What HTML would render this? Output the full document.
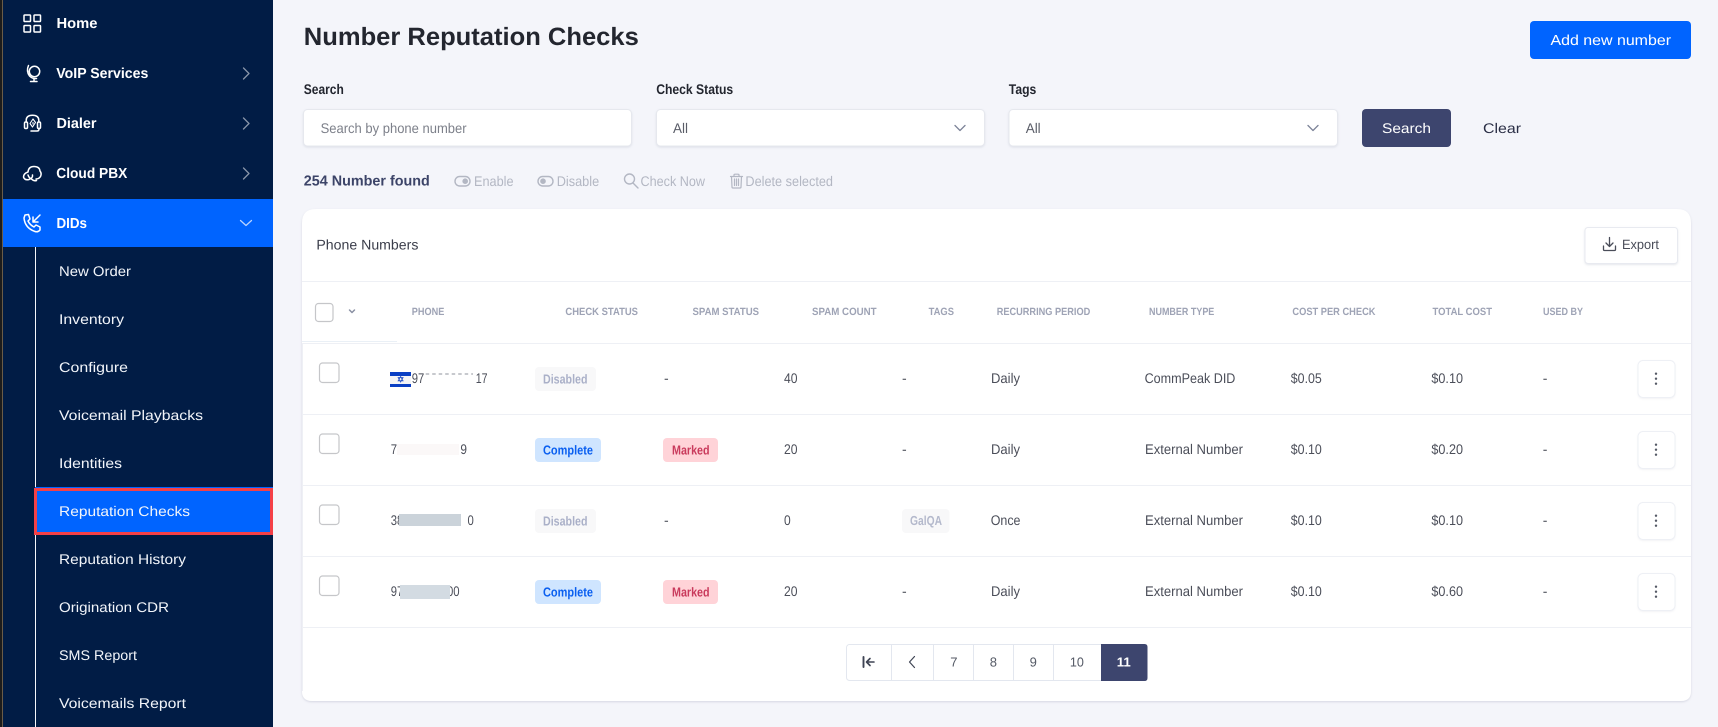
<!DOCTYPE html>
<html><head><meta charset="utf-8"><title>Number Reputation Checks</title>
<style>
html,body{margin:0;padding:0;background:#f4f5fa;width:1718px;height:727px;overflow:hidden}
svg{display:block}
text{font-family:"Liberation Sans",sans-serif;white-space:pre}
.nav{font-size:14.5px;font-weight:700;fill:#fff}
.sub{font-size:14px;fill:#f2f5fa}
.lbl{font-size:14px;font-weight:700;fill:#23262f}
.th{font-size:10.5px;font-weight:700;fill:#9ea3b5}
.td{font-size:14px;fill:#4b4e59}
.act{font-size:14px;fill:#b3b7c3}
.bd{font-size:13px;font-weight:700}
.pg{font-size:13px;fill:#555a66}
.ic{fill:none;stroke:#fff;stroke-width:1.5;stroke-linecap:round;stroke-linejoin:round}
.gr{fill:none;stroke:#b3b7c3;stroke-width:1.4;stroke-linecap:round;stroke-linejoin:round}
</style></head><body>
<svg width="1718" height="727" viewBox="0 0 1718 727" xmlns="http://www.w3.org/2000/svg" text-rendering="geometricPrecision">
<defs>
<filter id="sh" x="-5%" y="-20%" width="110%" height="140%"><feDropShadow dx="0" dy="1" stdDeviation="1" flood-color="#8a90a8" flood-opacity=".22"/></filter>
<filter id="sl" x="-10%" y="-10%" width="120%" height="120%"><feDropShadow dx="0" dy="1" stdDeviation=".7" flood-color="#8a90a8" flood-opacity=".1"/></filter>
<filter id="cs" x="-2%" y="-2%" width="104%" height="104%"><feDropShadow dx="0" dy="1" stdDeviation="1" flood-color="#8a90a8" flood-opacity=".3"/></filter>
</defs>
<rect width="1718" height="727" fill="#f4f5fa"/>
<!-- sidebar -->
<rect x="0" y="0" width="273" height="727" fill="#011c45"/>
<rect x="0" y="0" width="2" height="727" fill="#1c1c1c"/>
<rect x="2" y="0" width="1" height="727" fill="#6a5c48"/>
<rect x="3" y="199" width="270" height="48" fill="#0064ff"/>
<rect x="35" y="247" width="1" height="480" fill="#f4f6fa"/>
<rect x="35" y="487" width="238" height="48" fill="#0064ff"/>
<rect x="35.5" y="489.5" width="236" height="44" fill="none" stroke="#f44047" stroke-width="3"/>

<!-- sidebar icons -->
<g class="ic">
<rect x="24" y="15" width="6.5" height="6.5" rx=".8"/><rect x="34" y="15" width="6.5" height="6.5" rx=".8"/>
<rect x="24" y="25.5" width="6.5" height="6.5" rx=".8"/><rect x="34" y="25.5" width="6.5" height="6.5" rx=".8"/>
</g>
<g class="ic" stroke-width="1.2">
<circle cx="34.5" cy="71.5" r="5.2"/><path d="M28.5 65.5 Q26 71 29.5 76 Q32.5 79 36.5 78.5"/><path d="M34 79V81M30.5 81.5H37"/>
<path d="M26.2 122V120.500Q26.200 115.300 32.500 115.300Q38.800 115.300 38.800 120.500V122"/>
<rect x="24.500" y="122" width="3" height="6.500" rx="1.200"/><rect x="37.500" y="122" width="3" height="6.500" rx="1.200"/>
<path d="M39 128.500V129Q39 131 37 131H31"/>
<path d="M33 119L35.500 122.500L32.500 127L30 123.500ZM33 122.500V124" stroke-width="1.100"/>
<path d="M28 172Q28.500 166.500 34 166.500Q39.500 166.500 40 171Q42 173.500 40.500 176.500Q39 179 36 179M28 172Q23.500 173.500 23.500 177Q24.500 180.500 29 179.500Q33 178 32.500 175M28 175Q29 178 31.500 179Q34 181.500 36.500 180.500"/>
<path d="M25 215L28.5 214.5L30 219L28 221Q30 225 34 227L36 225L40 227V230Q38 232.500 35 231.500Q25 228 24 218Z" stroke-width="1.500"/>
<path d="M40 215L33 222M33 217V222H38" stroke-width="1.500"/>
</g>
<g fill="none" stroke="#8a96aa" stroke-width="1.3" stroke-linecap="round" stroke-linejoin="round">
<path d="M243.500 68L249 73.500L243.500 79"/><path d="M243.500 118L249 123.500L243.500 129"/><path d="M243.500 168L249 173.500L243.500 179"/>
<path d="M240.500 220.500L246 225.500L251.500 220.500" stroke="#b9d3ff"/>
</g>

<!-- sidebar text -->
<text class="nav" x="56.500" y="28" textLength="41" lengthAdjust="spacingAndGlyphs">Home</text>
<text class="nav" x="56.300" y="78" textLength="92" lengthAdjust="spacingAndGlyphs">VoIP Services</text>
<text class="nav" x="56.500" y="128" textLength="40" lengthAdjust="spacingAndGlyphs">Dialer</text>
<text class="nav" x="56.300" y="178" textLength="71" lengthAdjust="spacingAndGlyphs">Cloud PBX</text>
<text class="nav" x="56.500" y="228" textLength="30.500" lengthAdjust="spacingAndGlyphs">DIDs</text>
<text class="sub" x="59" y="276" textLength="72" lengthAdjust="spacingAndGlyphs">New Order</text>
<text class="sub" x="59" y="324" textLength="65" lengthAdjust="spacingAndGlyphs">Inventory</text>
<text class="sub" x="59" y="372" textLength="69" lengthAdjust="spacingAndGlyphs">Configure</text>
<text class="sub" x="59" y="420" textLength="144" lengthAdjust="spacingAndGlyphs">Voicemail Playbacks</text>
<text class="sub" x="59" y="468" textLength="63" lengthAdjust="spacingAndGlyphs">Identities</text>
<text class="sub" x="59" y="516" textLength="131" lengthAdjust="spacingAndGlyphs">Reputation Checks</text>
<text class="sub" x="59" y="564" textLength="127" lengthAdjust="spacingAndGlyphs">Reputation History</text>
<text class="sub" x="59" y="612" textLength="110" lengthAdjust="spacingAndGlyphs">Origination CDR</text>
<text class="sub" x="59" y="660" textLength="78" lengthAdjust="spacingAndGlyphs">SMS Report</text>
<text class="sub" x="59" y="708" textLength="127" lengthAdjust="spacingAndGlyphs">Voicemails Report</text>

<!-- header -->
<text x="303.800" y="45" font-size="25" font-weight="700" fill="#23262f" textLength="335" lengthAdjust="spacingAndGlyphs">Number Reputation Checks</text>
<rect x="1530" y="21" width="161" height="38" rx="4" fill="#0064ff"/>
<text x="1550.500" y="45" font-size="14.500" fill="#fff" textLength="120.500" lengthAdjust="spacingAndGlyphs">Add new number</text>

<!-- filters -->
<text class="lbl" x="303.800" y="94" textLength="40" lengthAdjust="spacingAndGlyphs">Search</text>
<text class="lbl" x="656.200" y="94" textLength="77" lengthAdjust="spacingAndGlyphs">Check Status</text>
<text class="lbl" x="1008.800" y="94" textLength="27.500" lengthAdjust="spacingAndGlyphs">Tags</text>
<g fill="#fff" stroke="#e6e8ee" filter="url(#sh)">
<rect x="303.500" y="109.500" width="328" height="36.500" rx="4"/>
<rect x="656.500" y="109.500" width="328" height="36.500" rx="4"/>
<rect x="1009" y="109.500" width="328.500" height="36.500" rx="4"/>
</g>
<text x="320.600" y="133" font-size="14" fill="#7d808a" textLength="146" lengthAdjust="spacingAndGlyphs">Search by phone number</text>
<text x="673" y="133" font-size="14" fill="#5a5d68" textLength="15" lengthAdjust="spacingAndGlyphs">All</text>
<text x="1025.700" y="133" font-size="14" fill="#5a5d68" textLength="15" lengthAdjust="spacingAndGlyphs">All</text>
<g fill="none" stroke="#7c8398" stroke-width="1.300" stroke-linecap="round" stroke-linejoin="round">
<path d="M955 125.500L960 130.500L965 125.500"/><path d="M1308 125.500L1313 130.500L1318 125.500"/>
</g>
<rect x="1362" y="109" width="89" height="38" rx="4" fill="#3d456e"/>
<text x="1382" y="133" font-size="14" fill="#fff" textLength="49" lengthAdjust="spacingAndGlyphs">Search</text>
<text x="1483" y="133" font-size="14" fill="#2a2e45" textLength="38" lengthAdjust="spacingAndGlyphs">Clear</text>

<!-- action row -->
<text x="303.800" y="185.700" font-size="14.500" font-weight="700" fill="#3c4468" textLength="126" lengthAdjust="spacingAndGlyphs">254 Number found</text>
<g class="gr">
<rect x="455" y="176.500" width="15" height="9.500" rx="4.700"/><circle cx="465.200" cy="181.200" r="2.800" fill="#b3b7c3" stroke="none"/>
<rect x="538" y="176.500" width="15" height="9.500" rx="4.700"/><circle cx="543" cy="181.200" r="2.800" fill="#b3b7c3" stroke="none"/>
<circle cx="629.500" cy="179" r="5"/><path d="M633 183L638 188"/>
<path d="M730.500 176.500H742.500M734 176.500V175Q734 174.200 735 174.200H738Q739 174.200 739 175V176.500M731.500 176.500L732 187Q732 188 733 188H740Q741 188 741 187L741.500 176.500M734.500 179V185.500M736.500 179V185.500M738.500 179V185.500" stroke-width="1.200"/>
</g>
<text class="act" x="474" y="186" textLength="39.500" lengthAdjust="spacingAndGlyphs">Enable</text>
<text class="act" x="556.700" y="186" textLength="42.500" lengthAdjust="spacingAndGlyphs">Disable</text>
<text class="act" x="640.500" y="186" textLength="64.500" lengthAdjust="spacingAndGlyphs">Check Now</text>
<text class="act" x="745.400" y="186" textLength="87.600" lengthAdjust="spacingAndGlyphs">Delete selected</text>

<!-- card -->
<path d="M302 223Q302 209 316 209H1677Q1691 209 1691 223V691Q1691 701 1681 701H312Q302 701 302 691Z" fill="#fff" filter="url(#cs)"/>
<text x="316.400" y="249.700" font-size="14" fill="#3a3d4a" textLength="102" lengthAdjust="spacingAndGlyphs">Phone Numbers</text>
<rect x="1585" y="227.500" width="92.500" height="36" rx="3" fill="#fff" stroke="#e8eaf0" filter="url(#sh)"/>
<g fill="none" stroke="#4a4d59" stroke-width="1.300" stroke-linecap="round" stroke-linejoin="round">
<path d="M1609.500 237.500V246M1606 243L1609.500 246.500L1613 243M1603.500 246V249.500Q1603.500 250.500 1604.500 250.500H1614.500Q1615.500 250.500 1615.500 249.500V246"/>
</g>
<text x="1622" y="249" font-size="13.500" fill="#4a4d59" textLength="37" lengthAdjust="spacingAndGlyphs">Export</text>

<!-- dividers -->
<g fill="#eef0f5">
<rect x="302" y="281" width="1389" height="1"/>
<rect x="302" y="343" width="1389" height="1"/>
<rect x="302" y="414" width="1389" height="1"/>
<rect x="302" y="485" width="1389" height="1"/>
<rect x="302" y="556" width="1389" height="1"/>
<rect x="302" y="627" width="1389" height="1"/>
</g>
<rect x="302" y="341" width="95" height="1" fill="#eaf0f6"/>
<rect x="302" y="344" width="1" height="347" fill="#eef0f5"/>

<!-- table header -->
<rect x="315.500" y="303.500" width="17.500" height="18" rx="3" fill="#fff" stroke="#c5c6c9" stroke-width="1.200"/>
<path d="M349.500 310L352 312.500L354.500 310" fill="none" stroke="#8a90a3" stroke-width="1.500" stroke-linecap="round" stroke-linejoin="round"/>
<text class="th" x="411.800" y="315" textLength="32.500" lengthAdjust="spacingAndGlyphs">PHONE</text>
<text class="th" x="565.400" y="315" textLength="72.600" lengthAdjust="spacingAndGlyphs">CHECK STATUS</text>
<text class="th" x="692.500" y="315" textLength="66.500" lengthAdjust="spacingAndGlyphs">SPAM STATUS</text>
<text class="th" x="812" y="315" textLength="64.600" lengthAdjust="spacingAndGlyphs">SPAM COUNT</text>
<text class="th" x="928.600" y="315" textLength="25.400" lengthAdjust="spacingAndGlyphs">TAGS</text>
<text class="th" x="996.700" y="315" textLength="93.600" lengthAdjust="spacingAndGlyphs">RECURRING PERIOD</text>
<text class="th" x="1149" y="315" textLength="65.300" lengthAdjust="spacingAndGlyphs">NUMBER TYPE</text>
<text class="th" x="1292.400" y="315" textLength="83.100" lengthAdjust="spacingAndGlyphs">COST PER CHECK</text>
<text class="th" x="1432.500" y="315" textLength="59.500" lengthAdjust="spacingAndGlyphs">TOTAL COST</text>
<text class="th" x="1543" y="315" textLength="40" lengthAdjust="spacingAndGlyphs">USED BY</text>

<!-- row checkboxes -->
<g fill="#fff" stroke="#c5c6c9" stroke-width="1.200">
<rect x="319.500" y="363" width="19.500" height="19.500" rx="3"/>
<rect x="319.500" y="434" width="19.500" height="19.500" rx="3"/>
<rect x="319.500" y="505" width="19.500" height="19.500" rx="3"/>
<rect x="319.500" y="576" width="19.500" height="19.500" rx="3"/>
</g>

<!-- phones -->
<rect x="390" y="372" width="21" height="15" fill="#f4f4f6"/>
<rect x="390" y="372" width="21" height="4" fill="#0a3fc4"/>
<rect x="390" y="384" width="21" height="3" fill="#0a3fc4"/>
<path d="M400.600 376.500L403 380.800H398.200ZM400.600 381.900L403 377.600H398.200Z" fill="none" stroke="#2f58c8" stroke-width=".9"/>
<text class="td" x="411.800" y="382.800" textLength="12.500" lengthAdjust="spacingAndGlyphs">97</text>
<path d="M425.700 374H473" stroke="#8f939c" stroke-width="1" stroke-dasharray="3.500 3"/>
<text class="td" x="475.700" y="382.800" textLength="11.800" lengthAdjust="spacingAndGlyphs">17</text>

<text class="td" x="390.700" y="453.800" textLength="6.300" lengthAdjust="spacingAndGlyphs">7</text>
<rect x="397" y="444" width="62" height="11" fill="#fbf8f8"/>
<text class="td" x="460.400" y="453.800" textLength="6.600" lengthAdjust="spacingAndGlyphs">9</text>

<text class="td" x="390.700" y="524.800" textLength="12.500" lengthAdjust="spacingAndGlyphs">38</text>
<rect x="399" y="514" width="62" height="12" fill="#cbd3da"/>
<text class="td" x="467.500" y="524.800" textLength="6.300" lengthAdjust="spacingAndGlyphs">0</text>

<text class="td" x="390.700" y="595.800" textLength="12.500" lengthAdjust="spacingAndGlyphs">97</text>
<text class="td" x="447" y="595.800" textLength="12.600" lengthAdjust="spacingAndGlyphs">00</text>
<rect x="400" y="585" width="50" height="14" fill="#d3dbe2"/>

<!-- badges -->
<rect x="535" y="367" width="61" height="24" rx="4" fill="#f8f8f9"/>
<text class="bd" x="543" y="383.500" fill="#aab0c8" textLength="44.500" lengthAdjust="spacingAndGlyphs">Disabled</text>
<rect x="535" y="438" width="66" height="24" rx="4" fill="#cfe5ff"/>
<text class="bd" x="543" y="454.500" fill="#0a5ff0" textLength="50" lengthAdjust="spacingAndGlyphs">Complete</text>
<rect x="663" y="438" width="55" height="24" rx="4" fill="#ffd3d8"/>
<text class="bd" x="672" y="454.500" fill="#c93a5c" textLength="37.600" lengthAdjust="spacingAndGlyphs">Marked</text>
<rect x="535" y="509" width="61" height="24" rx="4" fill="#f8f8f9"/>
<text class="bd" x="543" y="525.500" fill="#aab0c8" textLength="44.500" lengthAdjust="spacingAndGlyphs">Disabled</text>
<rect x="535" y="580" width="66" height="24" rx="4" fill="#cfe5ff"/>
<text class="bd" x="543" y="596.500" fill="#0a5ff0" textLength="50" lengthAdjust="spacingAndGlyphs">Complete</text>
<rect x="663" y="580" width="55" height="24" rx="4" fill="#ffd3d8"/>
<text class="bd" x="672" y="596.500" fill="#c93a5c" textLength="37.600" lengthAdjust="spacingAndGlyphs">Marked</text>
<text class="td" x="664" y="382.800">-</text>
<text class="td" x="664" y="524.800">-</text>

<!-- spam count -->
<text class="td" x="784" y="382.800" textLength="13.500" lengthAdjust="spacingAndGlyphs">40</text>
<text class="td" x="784" y="453.800" textLength="13.500" lengthAdjust="spacingAndGlyphs">20</text>
<text class="td" x="784" y="524.800" textLength="6.700" lengthAdjust="spacingAndGlyphs">0</text>
<text class="td" x="784" y="595.800" textLength="13.500" lengthAdjust="spacingAndGlyphs">20</text>

<!-- tags -->
<text class="td" x="902" y="382.800">-</text>
<text class="td" x="902" y="453.800">-</text>
<rect x="902" y="509" width="47.500" height="24" rx="4" fill="#f8f8f9"/>
<text class="bd" x="910" y="525" fill="#b4b9cc" textLength="32" lengthAdjust="spacingAndGlyphs">GalQA</text>
<text class="td" x="902" y="595.800">-</text>

<!-- recurring -->
<text class="td" x="991" y="382.800" textLength="29" lengthAdjust="spacingAndGlyphs">Daily</text>
<text class="td" x="991" y="453.800" textLength="29" lengthAdjust="spacingAndGlyphs">Daily</text>
<text class="td" x="990.700" y="524.800" textLength="29.800" lengthAdjust="spacingAndGlyphs">Once</text>
<text class="td" x="991" y="595.800" textLength="29" lengthAdjust="spacingAndGlyphs">Daily</text>

<!-- number type -->
<text class="td" x="1144.600" y="382.800" textLength="90.800" lengthAdjust="spacingAndGlyphs">CommPeak DID</text>
<text class="td" x="1145" y="453.800" textLength="98" lengthAdjust="spacingAndGlyphs">External Number</text>
<text class="td" x="1145" y="524.800" textLength="98" lengthAdjust="spacingAndGlyphs">External Number</text>
<text class="td" x="1145" y="595.800" textLength="98" lengthAdjust="spacingAndGlyphs">External Number</text>

<!-- cost -->
<text class="td" x="1290.800" y="382.800" textLength="31" lengthAdjust="spacingAndGlyphs">$0.05</text>
<text class="td" x="1290.800" y="453.800" textLength="31" lengthAdjust="spacingAndGlyphs">$0.10</text>
<text class="td" x="1290.800" y="524.800" textLength="31" lengthAdjust="spacingAndGlyphs">$0.10</text>
<text class="td" x="1290.800" y="595.800" textLength="31" lengthAdjust="spacingAndGlyphs">$0.10</text>

<!-- total -->
<text class="td" x="1431.400" y="382.800" textLength="31.600" lengthAdjust="spacingAndGlyphs">$0.10</text>
<text class="td" x="1431.400" y="453.800" textLength="31.600" lengthAdjust="spacingAndGlyphs">$0.20</text>
<text class="td" x="1431.400" y="524.800" textLength="31.600" lengthAdjust="spacingAndGlyphs">$0.10</text>
<text class="td" x="1431.400" y="595.800" textLength="31.600" lengthAdjust="spacingAndGlyphs">$0.60</text>

<!-- used by -->
<text class="td" x="1542.700" y="382.800">-</text>
<text class="td" x="1542.700" y="453.800">-</text>
<text class="td" x="1542.700" y="524.800">-</text>
<text class="td" x="1542.700" y="595.800">-</text>

<!-- row actions -->
<g fill="#fff" stroke="#eef0f5" filter="url(#sl)">
<rect x="1638" y="360.500" width="37" height="37" rx="5"/>
<rect x="1638" y="431.500" width="37" height="37" rx="5"/>
<rect x="1638" y="502.500" width="37" height="37" rx="5"/>
<rect x="1638" y="573.500" width="37" height="37" rx="5"/>
</g>
<g fill="#555a66">
<circle cx="1656" cy="373.700" r="1.200"/><circle cx="1656" cy="378.700" r="1.200"/><circle cx="1656" cy="383.700" r="1.200"/>
<circle cx="1656" cy="444.700" r="1.200"/><circle cx="1656" cy="449.700" r="1.200"/><circle cx="1656" cy="454.700" r="1.200"/>
<circle cx="1656" cy="515.700" r="1.200"/><circle cx="1656" cy="520.700" r="1.200"/><circle cx="1656" cy="525.700" r="1.200"/>
<circle cx="1656" cy="586.700" r="1.200"/><circle cx="1656" cy="591.700" r="1.200"/><circle cx="1656" cy="596.700" r="1.200"/>
</g>

<!-- pagination -->
<rect x="846.500" y="644.500" width="300.500" height="36" rx="3" fill="#fff" stroke="#e3e7ef"/>
<path d="M891.500 644.500V680.500M933.500 644.500V680.500M973.500 644.500V680.500M1013.500 644.500V680.500M1053.500 644.500V680.500" stroke="#e3e7ef" fill="none"/>
<path d="M1101 644H1144.500Q1147.500 644 1147.500 647V678Q1147.500 681 1144.500 681H1101Z" fill="#3d456e"/>
<g fill="none" stroke="#3f4454" stroke-linecap="round" stroke-linejoin="round">
<path d="M863.500 657V667" stroke-width="1.900"/><path d="M874 662H867M870 658.500L866.500 662L870 665.500" stroke-width="1.600"/>
<path d="M914.500 656.500L909.500 662L914.500 667.500" stroke-width="1.200"/>
</g>
<text class="pg" x="953.900" y="666.700" text-anchor="middle">7</text>
<text class="pg" x="993.400" y="666.700" text-anchor="middle">8</text>
<text class="pg" x="1033.200" y="666.700" text-anchor="middle">9</text>
<text class="pg" x="1076.900" y="666.700" text-anchor="middle" textLength="14" lengthAdjust="spacingAndGlyphs">10</text>
<text x="1123.800" y="666.700" text-anchor="middle" font-size="13" font-weight="700" fill="#fff" textLength="14" lengthAdjust="spacingAndGlyphs">11</text>
</svg>
</body></html>
